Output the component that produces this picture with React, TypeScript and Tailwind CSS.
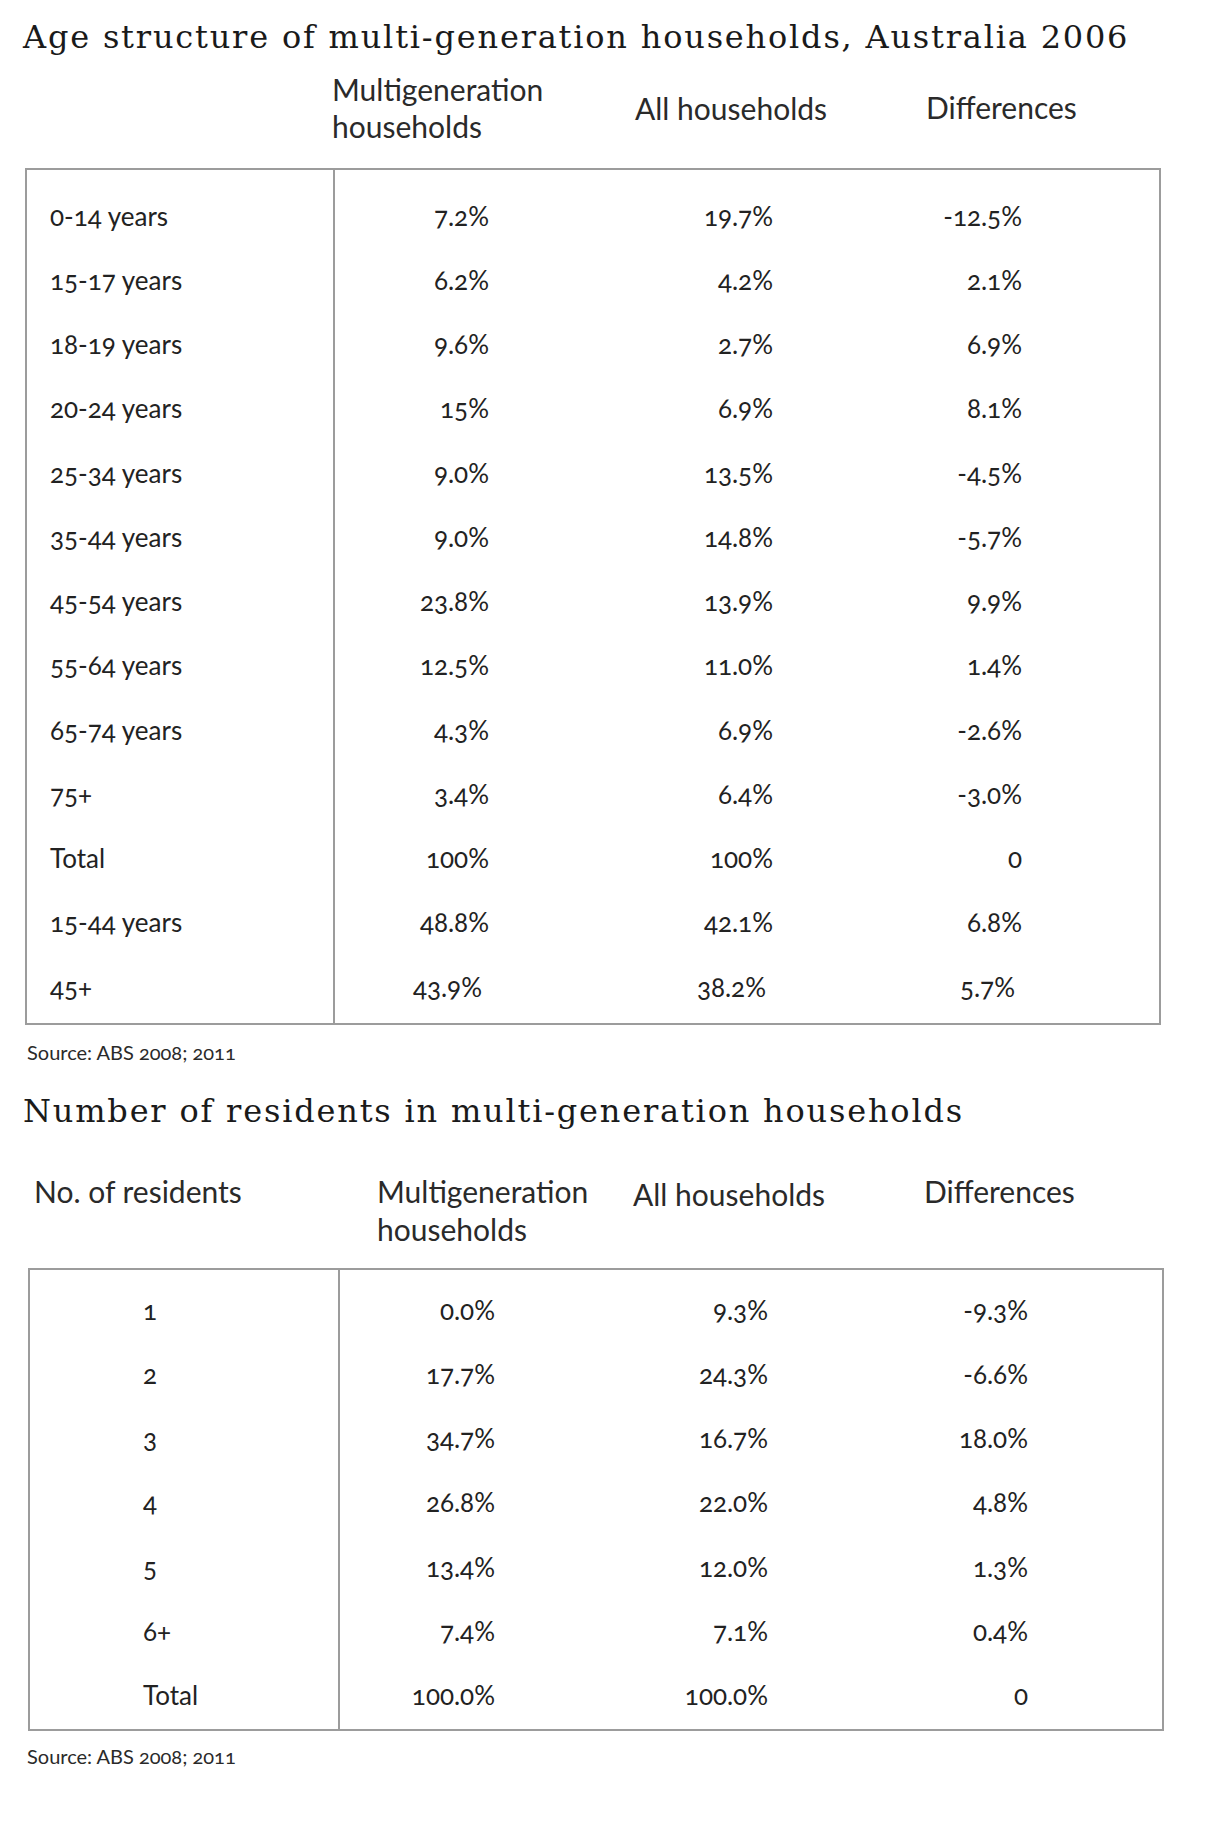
const ageRows = [
  { label: "0-14 years", multi: "7.2%", all: "19.7%", diff: "-12.5%" },
  { label: "15-17 years", multi: "6.2%", all: "4.2%", diff: "2.1%" },
  { label: "18-19 years", multi: "9.6%", all: "2.7%", diff: "6.9%" },
  { label: "20-24 years", multi: "15%", all: "6.9%", diff: "8.1%" },
  { label: "25-34 years", multi: "9.0%", all: "13.5%", diff: "-4.5%" },
  { label: "35-44 years", multi: "9.0%", all: "14.8%", diff: "-5.7%" },
  { label: "45-54 years", multi: "23.8%", all: "13.9%", diff: "9.9%" },
  { label: "55-64 years", multi: "12.5%", all: "11.0%", diff: "1.4%" },
  { label: "65-74 years", multi: "4.3%", all: "6.9%", diff: "-2.6%" },
  { label: "75+", multi: "3.4%", all: "6.4%", diff: "-3.0%" },
  { label: "Total", multi: "100%", all: "100%", diff: "0" },
  { label: "15-44 years", multi: "48.8%", all: "42.1%", diff: "6.8%" },
  { label: "45+", multi: "43.9%", all: "38.2%", diff: "5.7%", shifted: true },
]

const residentRows = [
  { label: "1", multi: "0.0%", all: "9.3%", diff: "-9.3%" },
  { label: "2", multi: "17.7%", all: "24.3%", diff: "-6.6%" },
  { label: "3", multi: "34.7%", all: "16.7%", diff: "18.0%" },
  { label: "4", multi: "26.8%", all: "22.0%", diff: "4.8%" },
  { label: "5", multi: "13.4%", all: "12.0%", diff: "1.3%" },
  { label: "6+", multi: "7.4%", all: "7.1%", diff: "0.4%" },
  { label: "Total", multi: "100.0%", all: "100.0%", diff: "0" },
]

const serif = "font-['DejaVu_Serif',serif]"

function Source() {
  return <p className="ml-[27px] text-[20px] leading-[24px] text-[#2a2a2a]">Source: ABS 2008; 2011</p>
}

export default function App() {
  return (
    <main className="min-h-[1841px] w-[1210px] bg-white font-['Lato','Open_Sans',sans-serif] text-[#222] [font-feature-settings:'onum']">
      <h1 className={`${serif} pl-[23px] pt-[16px] text-[32px] font-normal leading-[42px] tracking-[1.8px] text-[#1a1a1a]`}>
        Age structure of multi-generation households, Australia 2006
      </h1>

      <div className="flex items-center pb-[23px] pt-[13px] text-[30px] leading-[37px] text-[#2a2a2a]">
        <div className="w-[332px] shrink-0" />
        <div className="w-[303px] shrink-0">
          Multigeneration
          <br />
          households
        </div>
        <div className="w-[291px] shrink-0">All households</div>
        <div className="-mt-[2px]">Differences</div>
      </div>

      <section className="ml-[25px] w-[1136px] border-2 border-[#9c9c9c] text-[26px]">
        <div className="flex">
          <div className="w-[308px] shrink-0 border-r-2 border-[#9c9c9c] pb-[4px] pl-[23px] pt-[14px]">
            {ageRows.map((row) => (
              <div key={row.label} className="flex h-[64.25px] items-center">
                {row.label}
              </div>
            ))}
          </div>
          <div className="pb-[4px] pt-[14px]">
            {ageRows.map((row) => (
              <div key={row.label} className={`flex h-[64.25px] items-center text-right ${row.shifted ? "-ml-[7px]" : ""}`}>
                <span className="w-[154px]">{row.multi}</span>
                <span className="w-[284px]">{row.all}</span>
                <span className="w-[249px]">{row.diff}</span>
              </div>
            ))}
          </div>
        </div>
      </section>

      <div className="mt-[15px]">
        <Source />
      </div>

      <h2 className={`${serif} mt-[26px] pl-[23px] text-[32px] font-normal leading-[42px] tracking-[1.8px] text-[#1a1a1a]`}>
        Number of residents in multi-generation households
      </h2>

      <div className="flex items-start pb-[20px] pt-[40px] text-[30px] leading-[38px] text-[#2a2a2a]">
        <div className="w-[377px] shrink-0 pl-[34px]">No. of residents</div>
        <div className="w-[256px] shrink-0">
          Multigeneration
          <br />
          households
        </div>
        <div className="mt-[3px] w-[291px] shrink-0">All households</div>
        <div>Differences</div>
      </div>

      <section className="ml-[28px] w-[1136px] border-2 border-[#9c9c9c] text-[26px]">
        <div className="flex">
          <div className="w-[310px] shrink-0 border-r-2 border-[#9c9c9c] pb-[1px] pl-[113px] pt-[8px]">
            {residentRows.map((row) => (
              <div key={row.label} className="flex h-[64.2px] items-center">
                {row.label}
              </div>
            ))}
          </div>
          <div className="pb-[1px] pt-[8px]">
            {residentRows.map((row) => (
              <div key={row.label} className="flex h-[64.2px] items-center text-right">
                <span className="w-[155px]">{row.multi}</span>
                <span className="w-[273px]">{row.all}</span>
                <span className="w-[260px]">{row.diff}</span>
              </div>
            ))}
          </div>
        </div>
      </section>

      <div className="mt-[13px]">
        <Source />
      </div>
    </main>
  )
}
